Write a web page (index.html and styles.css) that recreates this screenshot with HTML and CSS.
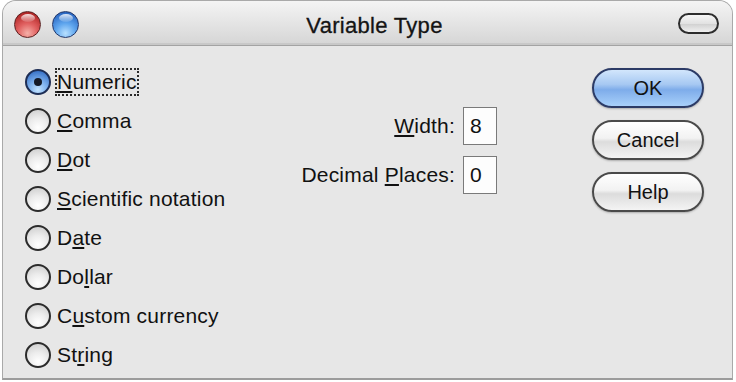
FILE: index.html
```html
<!DOCTYPE html>
<html>
<head>
<meta charset="utf-8">
<link rel="stylesheet" href="styles.css">
</head>
<body>
<div class="window">
  <div class="titlebar">
    <div class="lights">
      <span class="light red"></span>
      <span class="light blue"></span>
    </div>
    <div class="title">Variable Type</div>
    <div class="tb-right"><span class="pill"></span></div>
  </div>
  <div class="content">
    <div class="radios">
      <div class="row"><span class="radio on"></span><span class="lbl focus"><u>N</u>umeric</span></div>
      <div class="row"><span class="radio"></span><span class="lbl"><u>C</u>omma</span></div>
      <div class="row"><span class="radio"></span><span class="lbl"><u>D</u>ot</span></div>
      <div class="row"><span class="radio"></span><span class="lbl"><u>S</u>cientific notation</span></div>
      <div class="row"><span class="radio"></span><span class="lbl">D<u>a</u>te</span></div>
      <div class="row"><span class="radio"></span><span class="lbl">Do<u>l</u>lar</span></div>
      <div class="row"><span class="radio"></span><span class="lbl">C<u>u</u>stom currency</span></div>
      <div class="row"><span class="radio"></span><span class="lbl">St<u>r</u>ing</span></div>
    </div>
    <div class="fields">
      <span class="flabel"><u>W</u>idth:</span><span class="box">8</span>
      <span class="flabel">Decimal <u>P</u>laces:</span><span class="box">0</span>
    </div>
    <div class="buttons">
      <div class="btn ok">OK</div>
      <div class="btn">Cancel</div>
      <div class="btn">Help</div>
    </div>
  </div>
</div>
</body>
</html>
```
FILE: styles.css
```css
html, body {
  margin: 0;
  padding: 0;
  background: #ffffff;
}
body {
  font-family: "Liberation Sans", Arial, sans-serif;
  color: #111;
}
.window {
  margin-left: 2px;
  width: 729px;
  height: 377px;
  border: 1px solid #a9a9a9;
  border-bottom: 2px solid #9c9c9c;
  border-radius: 14px 14px 0 0;
  background: #e7e7e7;
  overflow: hidden;
}
.titlebar {
  height: 44px;
  border-bottom: 1px solid #a3a3a3;
  background: linear-gradient(to bottom, #f4f4f4 0%, #e6e6e6 45%, #d5d5d5 100%);
  display: grid;
  grid-template-columns: 1fr auto 1fr;
  align-items: center;
  box-shadow: inset 0 -2px 0 #c8c8c8;
}
.lights {
  display: flex;
  gap: 11px;
  padding-left: 11px;
  padding-top: 2px;
}
.light {
  width: 27px;
  height: 27px;
  border-radius: 50%;
  position: relative;
  box-sizing: border-box;
}
.light::after {
  content: "";
  position: absolute;
  left: 6px;
  top: 2px;
  width: 14px;
  height: 8px;
  border-radius: 50%;
  background: linear-gradient(to bottom, rgba(255,255,255,0.85), rgba(255,255,255,0.1));
}
.red {
  border: 1.5px solid #5c2222;
  background: radial-gradient(circle at 50% 85%, #f5b0a8 0%, #e06060 40%, #b52a2a 80%, #8a1c1c 100%);
}
.blue {
  border: 1.5px solid #24386a;
  background: radial-gradient(circle at 50% 85%, #b8e0ff 0%, #5fa6ee 40%, #2e6cc6 80%, #1f4c98 100%);
}
.title {
  font-size: 22px;
  letter-spacing: 0.3px;
  color: #141414;
  -webkit-text-stroke: 0.3px #141414;
  padding-top: 5px;
  padding-left: 14px;
}
.tb-right {
  display: flex;
  justify-content: flex-end;
  padding-right: 13px;
  padding-top: 1px;
}
.pill {
  width: 37px;
  height: 17px;
  border: 2px solid #2d2d2d;
  border-radius: 11px;
  background: linear-gradient(to bottom, #f6f6f6 0%, #e2e2e2 50%, #d0d0d0 52%, #f0f0f0 100%);
}
.content {
  display: flex;
  padding: 0 28px 0 22px;
}
.radios {
  flex: 1;
  padding-top: 16px;
}
.row {
  height: 39px;
  display: flex;
  align-items: center;
  gap: 6px;
}
.radio {
  width: 26px;
  height: 26px;
  box-sizing: border-box;
  border-radius: 50%;
  border: 2px solid #2b2b2b;
  background: radial-gradient(circle at 50% 80%, #ffffff 0%, #ececec 45%, #c9c9c9 100%);
  position: relative;
}
.radio.on {
  border-color: #1e2e55;
  background: radial-gradient(circle at 50% 85%, #c4e4ff 0%, #7fb2ee 40%, #3b74c8 85%, #2a58a4 100%);
}
.radio.on::after {
  content: "";
  position: absolute;
  left: 7px;
  top: 7px;
  width: 8px;
  height: 8px;
  border-radius: 50%;
  background: #141a28;
}
.lbl {
  font-size: 21px;
  line-height: 24px;
  letter-spacing: 0.2px;
}
.focus {
  outline: 2px dotted #2a2a2a;
  outline-offset: 0px;
}
u {
  text-decoration-thickness: 2px;
  text-underline-offset: 2px;
}
.fields {
  padding-top: 61px;
  display: grid;
  grid-template-columns: auto 34px;
  column-gap: 8px;
  row-gap: 11px;
  align-items: center;
  align-content: start;
}
.flabel {
  font-size: 21px;
  text-align: right;
  letter-spacing: 0.2px;
}
.box {
  width: 34px;
  height: 38px;
  box-sizing: border-box;
  border: 1px solid #7a7a7a;
  background: #fdfdfd;
  font-size: 21px;
  line-height: 36px;
  padding-left: 6px;
}
.buttons {
  margin-left: 95px;
  padding-top: 22px;
  display: flex;
  flex-direction: column;
  gap: 12px;
}
.btn {
  width: 112px;
  height: 40px;
  box-sizing: border-box;
  border-radius: 20px;
  border: 2px solid #4a4a4a;
  background: linear-gradient(to bottom, #ffffff 0%, #f2f2f2 45%, #dcdcdc 55%, #f4f4f4 100%);
  box-shadow: 0 1px 2px rgba(0,0,0,0.25);
  font-size: 20px;
  display: flex;
  align-items: center;
  justify-content: center;
  color: #111;
}
.btn.ok {
  border-color: #2c3b66;
  background: linear-gradient(to bottom, #d2e6fc 0%, #a6c8f2 40%, #7eacea 55%, #a8d0fa 100%);
}
```
